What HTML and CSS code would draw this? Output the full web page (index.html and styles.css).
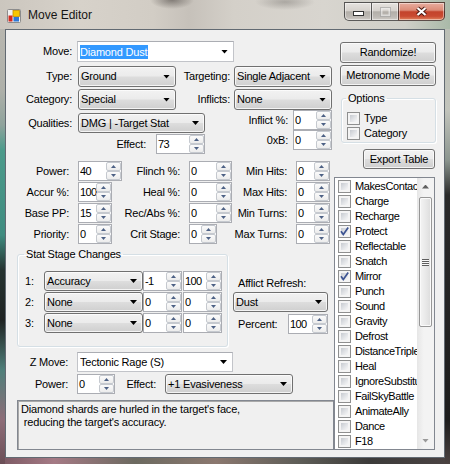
FILE: index.html
```html
<!DOCTYPE html>
<html lang="en">
<head>
<meta charset="utf-8">
<title>Move Editor</title>
<link rel="stylesheet" href="styles.css">
</head>
<body>
<div class="window">
  <div class="titlebar">
    <svg class="appicon" width="14" height="14" viewBox="0 0 14 14" aria-hidden="true">
      <rect x="0.5" y="0.5" width="13" height="13" rx="1" fill="#f0f0f0" stroke="#8c8c8c"/>
      <rect x="6" y="1.5" width="6.5" height="6" fill="#f7c600" stroke="#c59000" stroke-width="0.8"/>
      <rect x="6.5" y="8" width="5.5" height="4.5" fill="#2f78d6"/>
      <rect x="1.5" y="6.5" width="4" height="6" fill="#d42a1e"/>
    </svg>
    <span class="title">Move Editor</span>
    <div class="capbtns">
      <div class="cap cap-min"><svg width="11" height="5" viewBox="0 0 11 5"><rect x="0.5" y="0.5" width="10" height="4" fill="#fff" stroke="#333"/></svg></div>
      <div class="cap cap-max"><svg width="11" height="10" viewBox="0 0 11 10"><rect x="1.5" y="1.5" width="8" height="7" fill="none" stroke="#f4f4f4" stroke-width="2" opacity=".6"/><rect x="0.5" y="0.5" width="10" height="9" fill="none" stroke="#9a9a9a" opacity=".6"/></svg></div>
      <div class="cap cap-close"><svg width="13" height="11" viewBox="0 0 13 11"><path d="M2.5 2 L10.5 9 M10.5 2 L2.5 9" stroke="#4a1810" stroke-width="4.2"/><path d="M2.5 2 L10.5 9 M10.5 2 L2.5 9" stroke="#fff" stroke-width="2.2"/></svg></div>
    </div>
  </div>

  <div class="client">
    <div class="left">
      <div class="row h21 mt11">
        <span class="lbl w66">Move:</span>
        <div class="ecombo ml5 w157"><span class="sel">Diamond Dust</span><i class="arr"></i></div>
      </div>
      <div class="row h21 mt4">
        <span class="lbl w66">Type:</span>
        <div class="combo ml6 w98"><span class="ct">Ground</span><i class="arr"></i></div>
        <span class="lbl w54">Targeting:</span>
        <div class="combo ml4 w98"><span class="ct">Single Adjacent</span><i class="arr"></i></div>
      </div>
      <div class="row h21 mt2">
        <span class="lbl w66">Category:</span>
        <div class="combo ml6 w98"><span class="ct">Special</span><i class="arr"></i></div>
        <span class="lbl w54">Inflicts:</span>
        <div class="combo ml4 w98"><span class="ct">None</span><i class="arr"></i></div>
      </div>

      <div class="mid">
        <div class="mid-left">
          <div class="row h20">
            <span class="lbl w66">Qualities:</span>
            <div class="combo ml6 w127 h20"><span class="ct">DMG | -Target Stat</span><i class="arr"></i></div>
          </div>
          <div class="row h20 mt1">
            <span class="lbl w140">Effect:</span>
            <div class="num ml10 w49"><span class="v">73</span><span class="spin"><i class="sp up"></i><i class="sp dn"></i></span></div>
          </div>
        </div>
        <div class="mid-right">
          <div class="row h20">
            <span class="lbl w83">Inflict %:</span>
            <div class="num ml5 w39"><span class="v">0</span><span class="spin"><i class="sp up"></i><i class="sp dn"></i></span></div>
          </div>
          <div class="row h20">
            <span class="lbl w83">0xB:</span>
            <div class="num ml5 w39"><span class="v">0</span><span class="spin"><i class="sp up"></i><i class="sp dn"></i></span></div>
          </div>
        </div>
      </div>

      <div class="nums">
        <span class="lbl">Power:</span>
        <div class="num w44"><span class="v">40</span><span class="spin"><i class="sp up"></i><i class="sp dn"></i></span></div>
        <span class="lbl">Flinch %:</span>
        <div class="num w43"><span class="v">0</span><span class="spin"><i class="sp up"></i><i class="sp dn"></i></span></div>
        <span class="lbl">Min Hits:</span>
        <div class="num w34"><span class="v">0</span><span class="spin"><i class="sp up"></i><i class="sp dn"></i></span></div>

        <span class="lbl">Accur %:</span>
        <div class="num w34"><span class="v">100</span><span class="spin"><i class="sp up"></i><i class="sp dn"></i></span></div>
        <span class="lbl">Heal %:</span>
        <div class="num w43"><span class="v">0</span><span class="spin"><i class="sp up"></i><i class="sp dn"></i></span></div>
        <span class="lbl">Max Hits:</span>
        <div class="num w34"><span class="v">0</span><span class="spin"><i class="sp up"></i><i class="sp dn"></i></span></div>

        <span class="lbl">Base PP:</span>
        <div class="num w34"><span class="v">15</span><span class="spin"><i class="sp up"></i><i class="sp dn"></i></span></div>
        <span class="lbl">Rec/Abs %:</span>
        <div class="num w43"><span class="v">0</span><span class="spin"><i class="sp up"></i><i class="sp dn"></i></span></div>
        <span class="lbl">Min Turns:</span>
        <div class="num w34"><span class="v">0</span><span class="spin"><i class="sp up"></i><i class="sp dn"></i></span></div>

        <span class="lbl">Priority:</span>
        <div class="num w34"><span class="v">0</span><span class="spin"><i class="sp up"></i><i class="sp dn"></i></span></div>
        <span class="lbl">Crit Stage:</span>
        <div class="num w28"><span class="v">0</span><span class="spin"><i class="sp up"></i><i class="sp dn"></i></span></div>
        <span class="lbl">Max Turns:</span>
        <div class="num w34"><span class="v">0</span><span class="spin"><i class="sp up"></i><i class="sp dn"></i></span></div>
      </div>

      <div class="stat">
        <fieldset class="grp stat-grp">
          <legend>Stat Stage Changes</legend>
          <div class="srows">
            <div class="srow">
              <span class="slbl">1:</span>
              <div class="combo w99 h20"><span class="ct">Accuracy</span><i class="arr"></i></div>
              <div class="num w39"><span class="v">-1</span><span class="spin"><i class="sp up"></i><i class="sp dn"></i></span></div>
              <div class="num ml1 w39"><span class="v">100</span><span class="spin"><i class="sp up"></i><i class="sp dn"></i></span></div>
            </div>
            <div class="srow">
              <span class="slbl">2:</span>
              <div class="combo w99 h20"><span class="ct">None</span><i class="arr"></i></div>
              <div class="num w39"><span class="v">0</span><span class="spin"><i class="sp up"></i><i class="sp dn"></i></span></div>
              <div class="num ml1 w39"><span class="v">0</span><span class="spin"><i class="sp up"></i><i class="sp dn"></i></span></div>
            </div>
            <div class="srow">
              <span class="slbl">3:</span>
              <div class="combo w99 h20"><span class="ct">None</span><i class="arr"></i></div>
              <div class="num w39"><span class="v">0</span><span class="spin"><i class="sp up"></i><i class="sp dn"></i></span></div>
              <div class="num ml1 w39"><span class="v">0</span><span class="spin"><i class="sp up"></i><i class="sp dn"></i></span></div>
            </div>
          </div>
        </fieldset>
        <div class="aff">
          <div class="aff-lbl">Afflict Refresh:</div>
          <div class="combo h20 mt2"><span class="ct">Dust</span><i class="arr"></i></div>
          <div class="row h20 mt2">
            <span class="plbl">Percent:</span>
            <div class="num w40"><span class="v">100</span><span class="spin"><i class="sp up"></i><i class="sp dn"></i></span></div>
          </div>
        </div>
      </div>

      <div class="row h20 mt5">
        <span class="lbl w62">Z Move:</span>
        <div class="ecombo ml9 w156 h20"><span class="ct">Tectonic Rage (S)</span><i class="arr"></i></div>
      </div>
      <div class="row h20 mt2">
        <span class="lbl w62">Power:</span>
        <div class="num ml9 w38"><span class="v">0</span><span class="spin"><i class="sp up"></i><i class="sp dn"></i></span></div>
        <span class="lbl w41">Effect:</span>
        <div class="combo ml9 w128 h20"><span class="ct">+1 Evasiveness</span><i class="arr"></i></div>
      </div>

      <div class="desc">Diamond shards are hurled in the target's face,
 reducing the target's accuracy.</div>
    </div>

    <div class="right">
      <div class="btn btn-rand">Randomize!</div>
      <div class="btn btn-metro">Metronome Mode</div>
      <fieldset class="grp opts">
        <legend>Options</legend>
        <div class="ck-row first"><span class="chk"></span><span class="ck-lbl">Type</span></div>
        <div class="ck-row"><span class="chk"></span><span class="ck-lbl">Category</span></div>
      </fieldset>
      <div class="btn btn-export">Export Table</div>
      <div class="listbox">
        <div class="items">
          <div class="li"><span class="chk"></span>MakesContact</div>
          <div class="li"><span class="chk"></span>Charge</div>
          <div class="li"><span class="chk"></span>Recharge</div>
          <div class="li"><span class="chk on"><svg width="11" height="11" viewBox="0 0 11 11"><path d="M2 5.2 L4.3 8.6 L9.2 1.4" fill="none" stroke="#3d5492" stroke-width="1.7"/></svg></span>Protect</div>
          <div class="li"><span class="chk"></span>Reflectable</div>
          <div class="li"><span class="chk"></span>Snatch</div>
          <div class="li"><span class="chk on"><svg width="11" height="11" viewBox="0 0 11 11"><path d="M2 5.2 L4.3 8.6 L9.2 1.4" fill="none" stroke="#3d5492" stroke-width="1.7"/></svg></span>Mirror</div>
          <div class="li"><span class="chk"></span>Punch</div>
          <div class="li"><span class="chk"></span>Sound</div>
          <div class="li"><span class="chk"></span>Gravity</div>
          <div class="li"><span class="chk"></span>Defrost</div>
          <div class="li"><span class="chk"></span>DistanceTriple</div>
          <div class="li"><span class="chk"></span>Heal</div>
          <div class="li"><span class="chk"></span>IgnoreSubstitute</div>
          <div class="li"><span class="chk"></span>FailSkyBattle</div>
          <div class="li"><span class="chk"></span>AnimateAlly</div>
          <div class="li"><span class="chk"></span>Dance</div>
          <div class="li"><span class="chk"></span>F18</div>
        </div>
        <div class="sb">
          <div class="sb-btn"><i class="sb-up"></i></div>
          <div class="sb-thumb"><i class="grip"></i></div>
          <div class="sb-fill"></div>
          <div class="sb-btn"><i class="sb-dn"></i></div>
        </div>
      </div>
    </div>
  </div>
</div>
</body>
</html>
```

FILE: styles.css
```css
* { box-sizing: border-box; }
html, body { margin: 0; padding: 0; }
body {
  width: 450px;
  height: 464px;
  overflow: hidden;
  font: 11px/13px "Liberation Sans", Arial, sans-serif;
  letter-spacing: -0.2px;
  color: #000;
  background: #333;
}

/* ---------- glass frame ---------- */
.window {
  width: 450px;
  height: 464px;
  background-color: #4a5552;
  background-image:
    linear-gradient(180deg, #bdbab3 0px, #aeb0a9 90px, #8fa39c 125px, #4c9b8b 150px, #3f8c80 235px, #253330 270px, #1f2322 320px, #4f7f7a 370px, #8d6d78 420px, #6b4e56 464px),
    linear-gradient(180deg, #b9bdb4 0px, #c2c4bc 110px, #8b958f 160px, #2a2a2a 195px, #1d1d1d 420px, #4b4241 464px),
    linear-gradient(90deg, #7a5862 0%, #a57a85 12%, #6c6a60 30%, #8b786f 48%, #5f5e58 66%, #3c3b3a 82%, #4a4242 100%);
  background-size: 5px 464px, 5px 464px, 450px 6px;
  background-position: 0 0, 445px 0, 0 458px;
  background-repeat: no-repeat;
}

.titlebar {
  height: 29px;
  display: flex;
  align-items: flex-start;
  background:
    radial-gradient(ellipse 22px 9px at 172px 0px, rgba(70,64,60,.55), rgba(70,64,60,0)),
    radial-gradient(ellipse 30px 8px at 285px 2px, rgba(90,86,82,.35), rgba(90,86,82,0)),
    linear-gradient(90deg, #cbc6be 0%, #d7d2ca 18%, #d2cdc5 34%, #c6c1ba 42%, #d4d0c9 52%, #d8d5cf 72%, #cfcfc8 90%, #a9b9a8 100%);
}
.appicon { flex: none; margin: 9px 0 0 7px; }
.title {
  margin: 8px 0 0 7px;
  font: 12px/14px "Liberation Sans", Arial, sans-serif;
  letter-spacing: 0;
  color: #151515;
}
.capbtns {
  margin: 2px 5px 0 auto;
  display: flex;
}
.cap {
  height: 19px;
  border: 1px solid rgba(45,45,45,.75);
  display: flex;
  align-items: center;
  justify-content: center;
  box-shadow: inset 0 0 0 1px rgba(255,255,255,.45);
}
.cap-min {
  width: 27px;
  border-right: none;
  border-radius: 0 0 0 5px;
  align-items: flex-end;
  padding-bottom: 4px;
  background: linear-gradient(180deg, #e6e3df 0%, #d6d2cd 45%, #b3afa9 52%, #bdb9b4 80%, #cfcbc6 100%);
}
.cap-max {
  width: 27px;
  border-right: none;
  background: linear-gradient(180deg, #e6e3df 0%, #d6d2cd 45%, #b3afa9 52%, #bdb9b4 80%, #cfcbc6 100%);
}
.cap-close {
  width: 47px;
  border-radius: 0 0 5px 0;
  background: linear-gradient(180deg, #e8ad9f 0%, #dc8c78 42%, #c3432b 52%, #c94a31 78%, #e0855f 100%);
}

/* ---------- client area ---------- */
.client {
  margin-left: 5px;
  width: 440px;
  height: 429px;
  border: 1px solid #626a72;
  background: #f0f0f0;
  display: flex;
}
.left { width: 328px; flex: none; }
.right { width: 110px; flex: none; }

.row { display: flex; align-items: center; }
.h20 { height: 20px; }
.h21 { height: 21px; }
.mt1 { margin-top: 1px; }
.mt2 { margin-top: 2px; }
.mt4 { margin-top: 4px; }
.mt5 { margin-top: 5px; }
.mt11 { margin-top: 11px; }
.ml1 { margin-left: 1px; }
.ml4 { margin-left: 4px; }
.ml5 { margin-left: 5px; }
.ml6 { margin-left: 6px; }
.ml9 { margin-left: 9px; }
.ml10 { margin-left: 10px; }

.lbl { flex: none; text-align: right; white-space: nowrap; }
.w28 { width: 28px; }
.w34 { width: 34px; }
.w38 { width: 38px; }
.w39 { width: 39px; }
.w40 { width: 40px; }
.w41 { width: 41px; }
.w43 { width: 43px; }
.w44 { width: 44px; }
.w49 { width: 49px; }
.w54 { width: 54px; }
.w62 { width: 62px; }
.w66 { width: 66px; }
.w83 { width: 83px; }
.w98 { width: 98px; }
.w99 { width: 99px; }
.w127 { width: 127px; }
.w128 { width: 128px; }
.w140 { width: 140px; }
.w156 { width: 156px; }
.w157 { width: 157px; }

/* drop-down list (button look) */
.combo {
  flex: none;
  height: 21px;
  display: flex;
  align-items: center;
  padding-left: 2px;
  border: 1px solid #707070;
  border-radius: 3px;
  background: linear-gradient(180deg, #f2f2f2 0%, #ebebeb 48%, #dddddd 52%, #cfcfcf 100%);
  box-shadow: inset 0 0 0 1px rgba(252,252,252,.8);
  white-space: nowrap;
}
.combo.h20, .ecombo.h20 { height: 20px; }
.ct { flex: 1; overflow: hidden; }
.arr {
  flex: none;
  width: 7px;
  height: 4px;
  margin: 0 5px 0 4px;
  background: #000;
  clip-path: polygon(0 0, 100% 0, 50% 100%);
}
/* editable combo (white) */
.ecombo {
  flex: none;
  height: 21px;
  display: flex;
  align-items: center;
  padding-left: 2px;
  border: 1px solid #c2c4c9;
  border-top-color: #abadb3;
  background: #fff;
  white-space: nowrap;
}
.sel {
  background: #3399ff;
  color: #fff;
  line-height: 14px;
  padding-right: 1px;
}
.ecombo .sel { flex: none; }
.ecombo .sel + .arr { margin-left: auto; }

/* numeric up-down */
.num {
  flex: none;
  height: 20px;
  display: flex;
  border: 1px solid #abadb3;
  background: #fff;
}
.num .v {
  flex: 1;
  min-width: 0;
  padding-left: 1px;
  line-height: 18px;
  letter-spacing: -0.6px;
  white-space: nowrap;
}
.spin {
  flex: none;
  width: 15px;
  display: flex;
  flex-direction: column;
}
.sp {
  flex: 1;
  display: flex;
  align-items: center;
  justify-content: center;
  border: 1px solid #c5c9cf;
  border-radius: 2px;
  background: linear-gradient(180deg, #fbfbfb 0%, #ececec 100%);
}
.sp::after {
  content: "";
  width: 5px;
  height: 3px;
  background: #4d6185;
  clip-path: polygon(50% 0, 100% 100%, 0 100%);
}
.sp.dn::after { clip-path: polygon(0 0, 100% 0, 50% 100%); }

/* middle block */
.mid { display: flex; }
.mid-left { width: 199px; padding-top: 3px; }
.mid-right { width: 127px; }

.nums {
  display: grid;
  grid-template-columns: 72px 44px 67px 43px 64px 34px;
  grid-auto-rows: 20px;
  row-gap: 1px;
  margin-top: 7px;
  align-items: center;
}
.nums .lbl { padding-right: 9px; }

/* group boxes */
.grp {
  margin: 0;
  padding: 0;
  min-width: 0;
  border: 1px solid #d5dfe5;
  border-radius: 3px;
  box-shadow: inset 1px 1px 0 #fff, 1px 1px 0 #fff;
}
.grp legend {
  padding: 0 2px;
  line-height: 13px;
}
.stat { display: flex; margin-top: 4px; }
.stat-grp {
  margin-left: 11px;
  width: 211px;
  padding-bottom: 13px;
}
.stat-grp legend { margin-left: 6px; }
.srows { margin-top: 10px; }
.srow {
  display: flex;
  align-items: center;
  height: 20px;
  padding-left: 7px;
}
.srow + .srow { margin-top: 1px; }
.slbl { width: 19px; flex: none; }

.aff { margin-left: 5px; width: 95px; padding-top: 28px; }
.aff-lbl { padding-left: 5px; line-height: 14px; height: 14px; white-space: nowrap; }
.plbl { width: 55px; padding-left: 5px; flex: none; }

.desc {
  margin: 6px 0 0 11px;
  width: 317px;
  height: 50px;
  padding: 2px 3px;
  border: 1px solid #828790;
  box-shadow: inset 1px 1px 0 #a9a9a9;
  background: #f0f0f0;
  white-space: pre;
  line-height: 13px;
}

/* ---------- right column ---------- */
.btn {
  display: flex;
  align-items: center;
  justify-content: center;
  border: 1px solid #707070;
  border-radius: 3px;
  background: linear-gradient(180deg, #f2f2f2 0%, #ebebeb 48%, #dddddd 52%, #cfcfcf 100%);
  box-shadow: inset 0 0 0 1px rgba(252,252,252,.8);
  white-space: nowrap;
}
.btn-rand { margin: 12px 0 0 6px; width: 96px; height: 21px; }
.btn-metro { margin: 2px 0 0 6px; width: 96px; height: 21px; }
.opts {
  margin: 6px 0 0 7px;
  width: 95px;
  padding-bottom: 2px;
}
.opts legend { margin-left: 4px; }
.ck-row {
  display: flex;
  align-items: center;
  height: 13px;
  padding-left: 5px;
  margin-top: 2px;
}
.ck-row.first { margin-top: 7px; }
.ck-lbl { margin-left: 4px; }
.btn-export { margin: 6px 0 0 29px; width: 72px; height: 20px; }

.chk {
  flex: none;
  width: 13px;
  height: 13px;
  padding: 2px;
  border: 1px solid #8e8f8f;
  background: linear-gradient(135deg, #c6cad0 0%, #e2e4e7 55%, #f7f7f7 100%) content-box, #f4f4f4;
}
.chk.on svg { display: block; margin: -2px; }

.listbox {
  margin-top: 8px;
  width: 101px;
  height: 273px;
  border: 1px solid #828790;
  background: #fff;
  display: flex;
}
.items { flex: 1; min-width: 0; overflow: hidden; padding-top: 1px; }
.li {
  height: 15px;
  display: flex;
  align-items: center;
  padding-left: 3px;
  white-space: nowrap;
  letter-spacing: -0.4px;
}
.li .chk { margin-right: 4px; }

.sb {
  width: 17px;
  flex: none;
  display: flex;
  flex-direction: column;
  background: linear-gradient(90deg, #e6e6e6 0%, #f3f3f3 40%, #f3f3f3 100%);
}
.sb-btn {
  height: 17px;
  display: flex;
  align-items: center;
  justify-content: center;
}
.sb-up, .sb-dn {
  width: 7px;
  height: 4px;
  background: #606060;
}
.sb-up { clip-path: polygon(50% 0, 100% 100%, 0 100%); }
.sb-dn { clip-path: polygon(0 0, 100% 0, 50% 100%); background: #9a9a9a; }
.sb-thumb {
  margin: 2px 0 0 2px;
  width: 13px;
  height: 130px;
  border: 1px solid #979797;
  border-radius: 2px;
  background: linear-gradient(90deg, #f4f4f4 0%, #e9e9e9 50%, #dcdcdc 100%);
  box-shadow: inset 0 0 0 1px #fafafa;
  display: flex;
  align-items: center;
  justify-content: center;
}
.grip {
  width: 7px;
  height: 7px;
  background: repeating-linear-gradient(180deg, #5e5e5e 0px, #5e5e5e 1px, #f8f8f8 1px, #f8f8f8 2px);
}
.sb-fill { flex: 1; }
```
